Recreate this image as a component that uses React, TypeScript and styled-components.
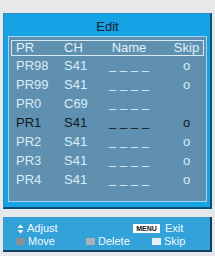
import React from "react";
import styled, { createGlobalStyle } from "styled-components";

const Global = createGlobalStyle`
  html, body { margin: 0; padding: 0; background: #e7e8ea; }
  body { font-family: "Liberation Sans", Arial, sans-serif; }
`;

const Page = styled.div`
  width: 215px;
  height: 256px;
  padding: 13px 3px 0 3px;
  box-sizing: border-box;
  display: flex;
  flex-direction: column;
  gap: 8px;
`;

const Panel = styled.div`
  width: 209px;
  height: 196px;
  box-sizing: border-box;
  background: #16a3e6;
  border: 1px solid #2a88c0;
  border-right: 2px solid #0e4f76;
  border-bottom: 2px solid #0e4f76;
  padding: 0 3px 5px 4px;
  display: flex;
  flex-direction: column;
`;

const Title = styled.div`
  height: 22px;
  padding-top: 4px;
  box-sizing: border-box;
  line-height: 18px;
  text-align: center;
  font-size: 13px;
  color: #13222e;
`;

const Inner = styled.div`
  flex: 1;
  background: #5f90b0;
  border: 1px solid #a4d4ee;
  padding: 3px 2px 0 2px;
  display: flex;
  flex-direction: column;
`;

const HeaderRow = styled.div`
  height: 16px;
  box-sizing: border-box;
  border: 1px solid #d6eaf6;
  display: grid;
  grid-template-columns: 48px 42px 46px 20px 29px;
  padding-left: 4px;
  align-items: center;
  font-size: 13px;
  line-height: 14px;
  color: #e2f1fa;
`;

const Row = styled.div<{ $sel?: boolean }>`
  height: 19px;
  display: grid;
  grid-template-columns: 48px 42px 46px 20px 29px;
  padding-left: 5px;
  align-items: center;
  font-size: 13px;
  line-height: 19px;
  color: ${(p) => (p.$sel ? "#0d1a25" : "#d8edf9")};
`;

const Cell = styled.span<{ $center?: boolean }>`
  text-align: ${(p) => (p.$center ? "center" : "left")};
  white-space: pre;
`;

const Dashes = styled.span`
  text-align: center;
  white-space: pre;
  letter-spacing: 0;
  margin-top: -2px;
`;

const Footer = styled.div`
  width: 209px;
  height: 35px;
  box-sizing: border-box;
  background: #33a2d9;
  border-right: 2px solid #0f3d5c;
  border-bottom: 2px solid #0f3d5c;
  padding: 5px 0 0 13px;
  display: flex;
  flex-direction: column;
  font-size: 11px;
  color: #f2f8fc;
`;

const FRow1 = styled.div`
  height: 13px;
  display: grid;
  grid-template-columns: 117px 1fr;
  align-items: center;
  line-height: 13px;
`;

const FRow2 = styled.div`
  height: 13px;
  display: grid;
  grid-template-columns: 70px 66px 1fr;
  align-items: center;
  line-height: 13px;
`;

const Item = styled.div`
  display: flex;
  align-items: center;
  gap: 3px;
`;

const Swatch = styled.span<{ $c: string }>`
  width: 9px;
  height: 7px;
  background: ${(p) => p.$c};
  display: inline-block;
`;

const MenuKey = styled.span`
  background: #ffffff;
  color: #111;
  font-size: 7px;
  font-weight: bold;
  padding: 0 1px;
  height: 9px;
  line-height: 9px;
  width: 27px;
  box-sizing: border-box;
  text-align: center;
  margin-right: 2px;
`;

const rows = [
  { pr: "PR98", ch: "S41", skip: "o" },
  { pr: "PR99", ch: "S41", skip: "o" },
  { pr: "PR0", ch: "C69", skip: "" },
  { pr: "PR1", ch: "S41", skip: "o", sel: true },
  { pr: "PR2", ch: "S41", skip: "o" },
  { pr: "PR3", ch: "S41", skip: "o" },
  { pr: "PR4", ch: "S41", skip: "o" },
];

export default function App() {
  return (
    <>
      <Global />
      <Page>
        <Panel>
          <Title>Edit</Title>
          <Inner>
            <HeaderRow>
              <Cell>PR</Cell>
              <Cell>CH</Cell>
              <Cell $center>Name</Cell>
              <Cell />
              <Cell $center>Skip</Cell>
            </HeaderRow>
            {rows.map((r) => (
              <Row key={r.pr} $sel={r.sel}>
                <Cell>{r.pr}</Cell>
                <Cell>{r.ch}</Cell>
                <Dashes>_ _ _ _</Dashes>
                <Cell />
                <Cell $center>{r.skip}</Cell>
              </Row>
            ))}
          </Inner>
        </Panel>
        <Footer>
          <FRow1>
            <Item>
              <svg width="7" height="10" viewBox="0 0 7 10" style={{ marginLeft: 1 }}>
                <polygon points="3.5,0.5 6.5,4 0.5,4" fill="#f2f8fc" />
                <polygon points="0.5,6 6.5,6 3.5,9.5" fill="#f2f8fc" />
              </svg>
              <span>Adjust</span>
            </Item>
            <Item>
              <MenuKey>MENU</MenuKey>
              <span>Exit</span>
            </Item>
          </FRow1>
          <FRow2>
            <Item>
              <Swatch $c="#8b8f97" />
              <span>Move</span>
            </Item>
            <Item>
              <Swatch $c="#a9b2ba" />
              <span>Delete</span>
            </Item>
            <Item>
              <Swatch $c="#e6eef4" />
              <span>Skip</span>
            </Item>
          </FRow2>
        </Footer>
      </Page>
    </>
  );
}
